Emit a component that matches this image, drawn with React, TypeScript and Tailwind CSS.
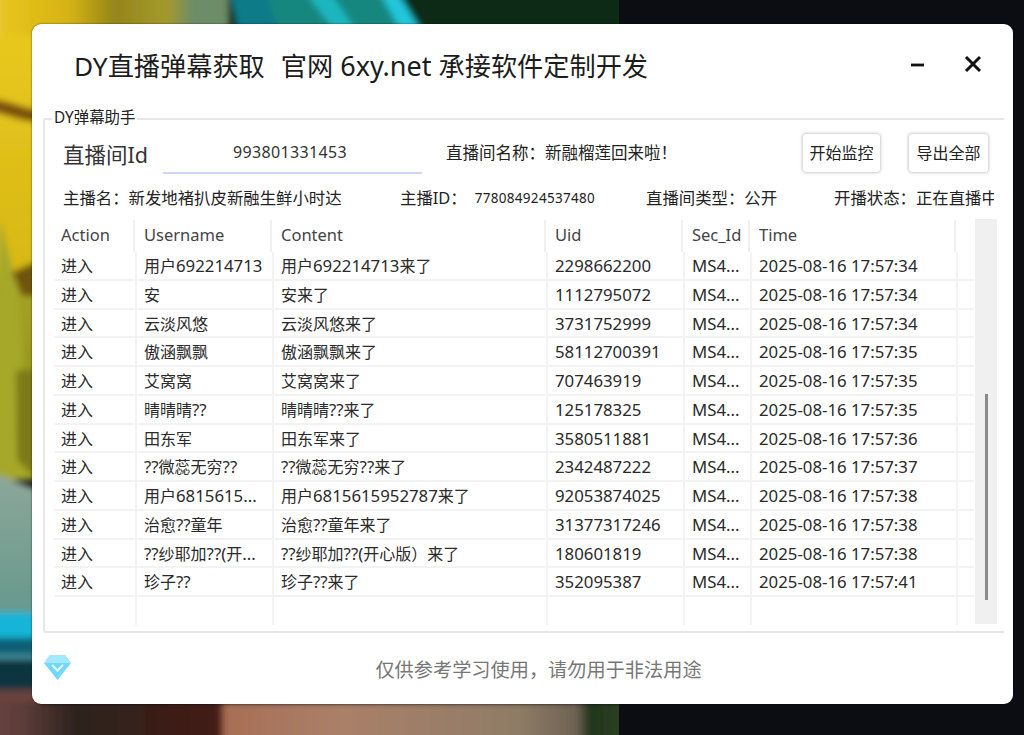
const rows = [
  ["用户692214713", "用户692214713来了", "2298662200", "2025-08-16 17:57:34"],
  ["安", "安来了", "1112795072", "2025-08-16 17:57:34"],
  ["云淡风悠", "云淡风悠来了", "3731752999", "2025-08-16 17:57:34"],
  ["傲涵飘飘", "傲涵飘飘来了", "58112700391", "2025-08-16 17:57:35"],
  ["艾窝窝", "艾窝窝来了", "707463919", "2025-08-16 17:57:35"],
  ["晴晴晴??", "晴晴晴??来了", "125178325", "2025-08-16 17:57:35"],
  ["田东军", "田东军来了", "3580511881", "2025-08-16 17:57:36"],
  ["??微蕊无穷??", "??微蕊无穷??来了", "2342487222", "2025-08-16 17:57:37"],
  ["用户6815615...", "用户6815615952787来了", "92053874025", "2025-08-16 17:57:38"],
  ["治愈??童年", "治愈??童年来了", "31377317246", "2025-08-16 17:57:38"],
  ["??纱耶加??(开...", "??纱耶加??(开心版）来了", "180601819", "2025-08-16 17:57:38"],
  ["珍子??", "珍子??来了", "352095387", "2025-08-16 17:57:41"],
];

const font = "[font-family:'Noto_Sans','Noto_Sans_CJK_SC',sans-serif]";
const bodyCols = "grid grid-cols-[83px_137px_274px_137px_67px_206px_16px]";
const headCols = "grid grid-cols-[81px_137px_274px_137px_67px_206px_18px]";

function Mixed({ text }: { text: string }) {
  return (
    <>
      {text.split(/([\x00-\x7f]+)/).map((part, i) =>
        /^[\x00-\x7f]+$/.test(part) ? <span key={i} className="text-[16.8px]">{part}</span> : part
      )}
    </>
  );
}

function Cell({ text }: { text?: string }) {
  return (
    <div className="border-r-2 last:border-r-0 border-[#f3f3f3] pl-[7px] whitespace-nowrap overflow-hidden leading-[28px]">
      {text ? <Mixed text={text} /> : null}
    </div>
  );
}

export default function App() {
  return (
    <div className={`relative w-[1024px] h-[735px] overflow-hidden bg-[#0b0d12] ${font}`}>
      <svg className="absolute left-0 top-0" width="619" height="735" viewBox="0 0 619 735">
        <defs>
          <linearGradient id="y" x1="0" y1="0" x2="0" y2="1">
            <stop offset="0" stopColor="#eccb1e" />
            <stop offset="1" stopColor="#d6b716" />
          </linearGradient>
          <linearGradient id="o" x1="0" y1="0" x2="0" y2="1">
            <stop offset="0" stopColor="#a8a422" />
            <stop offset="1" stopColor="#87861a" />
          </linearGradient>
          <linearGradient id="g" x1="0" y1="0" x2="0" y2="1">
            <stop offset="0" stopColor="#8ea79a" />
            <stop offset="1" stopColor="#64998c" />
          </linearGradient>
          <linearGradient id="t" x1="0" y1="0" x2="1" y2="0">
            <stop offset="0" stopColor="#e6cf86" />
            <stop offset="0.03" stopColor="#e8c41c" />
            <stop offset="0.13" stopColor="#d6b315" />
            <stop offset="0.2" stopColor="#94851a" />
            <stop offset="0.28" stopColor="#a49a2c" />
            <stop offset="0.32" stopColor="#6d8c68" />
            <stop offset="0.37" stopColor="#6d8c68" />
          </linearGradient>
          <linearGradient id="b" x1="0" y1="0" x2="1" y2="0">
            <stop offset="0" stopColor="#6b4340" />
            <stop offset="0.06" stopColor="#5c3c38" />
            <stop offset="0.14" stopColor="#2d221f" />
            <stop offset="0.36" stopColor="#431d13" />
            <stop offset="0.37" stopColor="#a86e55" />
            <stop offset="0.55" stopColor="#aa8069" />
            <stop offset="0.82" stopColor="#8f7c66" />
            <stop offset="0.91" stopColor="#6e6254" />
            <stop offset="0.93" stopColor="#22351c" />
            <stop offset="1" stopColor="#2f4427" />
          </linearGradient>
          <filter id="s" x="-5%" y="-5%" width="110%" height="110%"><feGaussianBlur stdDeviation="3" /></filter>
        </defs>
        <g filter="url(#s)">
          <rect x="-15" y="-15" width="650" height="300" fill="url(#y)" />
          <rect x="-15" y="-15" width="650" height="50" fill="url(#t)" />
          <path d="M-15 98C10 100 20 108 40 110V122C20 122 8 114 -15 110z" fill="#7a4f10" />
          <rect x="-15" y="275" width="55" height="205" fill="url(#o)" />
          <path d="M0 220L18 290 32 480H-15z" fill="#a6a82a" />
          <path d="M12 272L40 260V296L22 296z" fill="#6e5410" />
          <path d="M16 370L17 460 40 482V370z" fill="#7c7a16" />
          <path d="M-15 470L40 490V620H-15z" fill="url(#g)" />
          <rect x="-15" y="612" width="55" height="26" fill="#17b4d6" />
          <rect x="-15" y="638" width="55" height="18" fill="#0a5f74" />
          <rect x="-15" y="655" width="55" height="4" fill="#4b98a6" />
          <rect x="-15" y="659" width="55" height="34" fill="#0a3540" />
          <rect x="-15" y="690" width="55" height="70" fill="#6b4340" />
          <path d="M228 -15H640V36H228z" fill="#0b2a12" />
          <path d="M228 -15H395L425 36H240z" fill="#15877f" />
          <path d="M228 -15H262L282 36H240z" fill="#0a7c88" />
          <path d="M300 -15H325L360 36H338z" fill="#1fb6c0" />
          <path d="M375 -15H392L424 36H404z" fill="#22c6dc" />
          <rect x="-15" y="702" width="650" height="60" fill="url(#b)" />
        </g>
      </svg>

      <div className="relative pl-[32px] pt-[24px]">
        <div className="w-[981px] h-[680px] rounded-[9px] bg-white shadow-[0_0_2px_#000a] flex flex-col px-[11px] text-[#222]">
          <div className="h-[94px] shrink-0 flex items-start">
            <div className="pl-[31px] pt-[21px] text-[26.2px] leading-[42px] text-[#1c1c1c] whitespace-nowrap flex-1">
              <span>DY直播弹幕获取</span>
              <span className="ml-[16px]">官网</span>
              <span className="ml-[7px] text-[27px]">6xy.net</span>
              <span className="ml-[7px]">承接软件定制开发</span>
            </div>
            <svg className="mt-[32px]" width="14" height="14" viewBox="0 0 14 14"><path d="M0 9h13" stroke="#111" strokeWidth="2.8" /></svg>
            <svg className="mt-[31px] ml-[39px] mr-[20px]" width="18" height="18" viewBox="0 0 18 18"><path d="M2 2l14 14M16 2L2 16" stroke="#111" strokeWidth="3" /></svg>
          </div>

          <div className="relative h-[515px] w-[961px] border-2 border-[#e6e6e6] rounded-l-[3px] border-r-0 pl-[8px] pr-[6px]">
            <div className="absolute left-[7px] -top-[12px] bg-white px-[2px] text-[15.4px] leading-[20px] text-[#222]">DY弹幕助手</div>

            <div className="h-[66px] flex items-center">
              <div className="w-[110px] pl-[10px] mt-[4px] text-[21.5px] text-[#333]">直播间Id</div>
              <div className="w-[259px] h-[41px] pt-[7px] pr-[5px] border-b-2 border-[#cfd5f8] text-center text-[16px] leading-[24px] tracking-[0.35px] text-[#333]">993801331453</div>
              <div className="ml-[24px] w-[356px] text-[16.5px] text-[#222]">直播间名称：新融榴莲回来啦！</div>
              <button className="w-[79px] h-[40px] rounded-[4px] border border-[#ddd] shadow-[0_0_3px_#ccc] text-[16px] text-[#222]">开始监控</button>
              <button className="ml-[27px] w-[81px] h-[40px] rounded-[4px] border border-[#ddd] shadow-[0_0_3px_#ccc] text-[16px] text-[#222]">导出全部</button>
            </div>

            <div className="h-[24px] mb-[10px] flex items-center text-[#222] text-[16.4px] leading-[24px] whitespace-nowrap overflow-hidden">
              <div className="w-[347px] pl-[10px]">主播名：新发地褚扒皮新融生鲜小时达</div>
              <div className="w-[246px] flex items-center">主播ID：<span className="ml-[8px] text-[13.5px] tracking-[0.3px]">778084924537480</span></div>
              <div className="w-[188px]">直播间类型：公开</div>
              <div className="w-[160px] overflow-hidden">开播状态：正在直播中</div>
            </div>

            <div className="flex h-[405px] pl-[1px]">
              <div className="w-[920px] shrink-0 text-[16px] text-[#2a2a2a] overflow-hidden">
                <div className={`${headCols} h-[32px]`}>
                  {["Action", "Username", "Content", "Uid", "Sec_Id", "Time", ""].map((h, i) => (
                    <div key={i} className="border-r-2 last:border-r-0 border-[#f0f0f0] first:pl-[7px] pl-[9px] leading-[30px] text-[16.5px] text-[#444]">{h}</div>
                  ))}
                </div>
                {rows.map((r, i) => (
                  <div key={i} className={`${bodyCols} h-[28.75px] border-b-2 border-[#f3f3f3]`}>
                    <Cell text="进入" />
                    <Cell text={r[0]} />
                    <Cell text={r[1]} />
                    <Cell text={r[2]} />
                    <Cell text="MS4..." />
                    <Cell text={r[3]} />
                    <Cell />
                  </div>
                ))}
                <div className={`${bodyCols} h-[28px]`}>
                  <Cell /><Cell /><Cell /><Cell /><Cell /><Cell /><Cell />
                </div>
              </div>
              <div className="ml-[1px] -mt-[1px] w-[22px] h-[405px] bg-[#f0f0f0] flex justify-center pt-[175px]">
                <div className="w-[3px] h-[206px] bg-[#8a8a8a]" />
              </div>
            </div>
          </div>

          <div className="flex-1 relative flex items-center justify-center">
            <svg className="absolute left-0 top-[21px]" width="29" height="27" viewBox="0 0 29 27">
              <path d="M7 1h15l6 8-13.500 17L1 9z" fill="#71d8fb" />
              <path d="M7 1h15l6 8H1z" fill="#a3e8fd" />
              <path d="M9 11l5.500 5.500L20 11" fill="none" stroke="#eafbff" strokeWidth="2" />
            </svg>
            <div className="ml-[32px] mt-[4px] text-[19.2px] text-[#777]">仅供参考学习使用，请勿用于非法用途</div>
          </div>
        </div>
      </div>
    </div>
  );
}
